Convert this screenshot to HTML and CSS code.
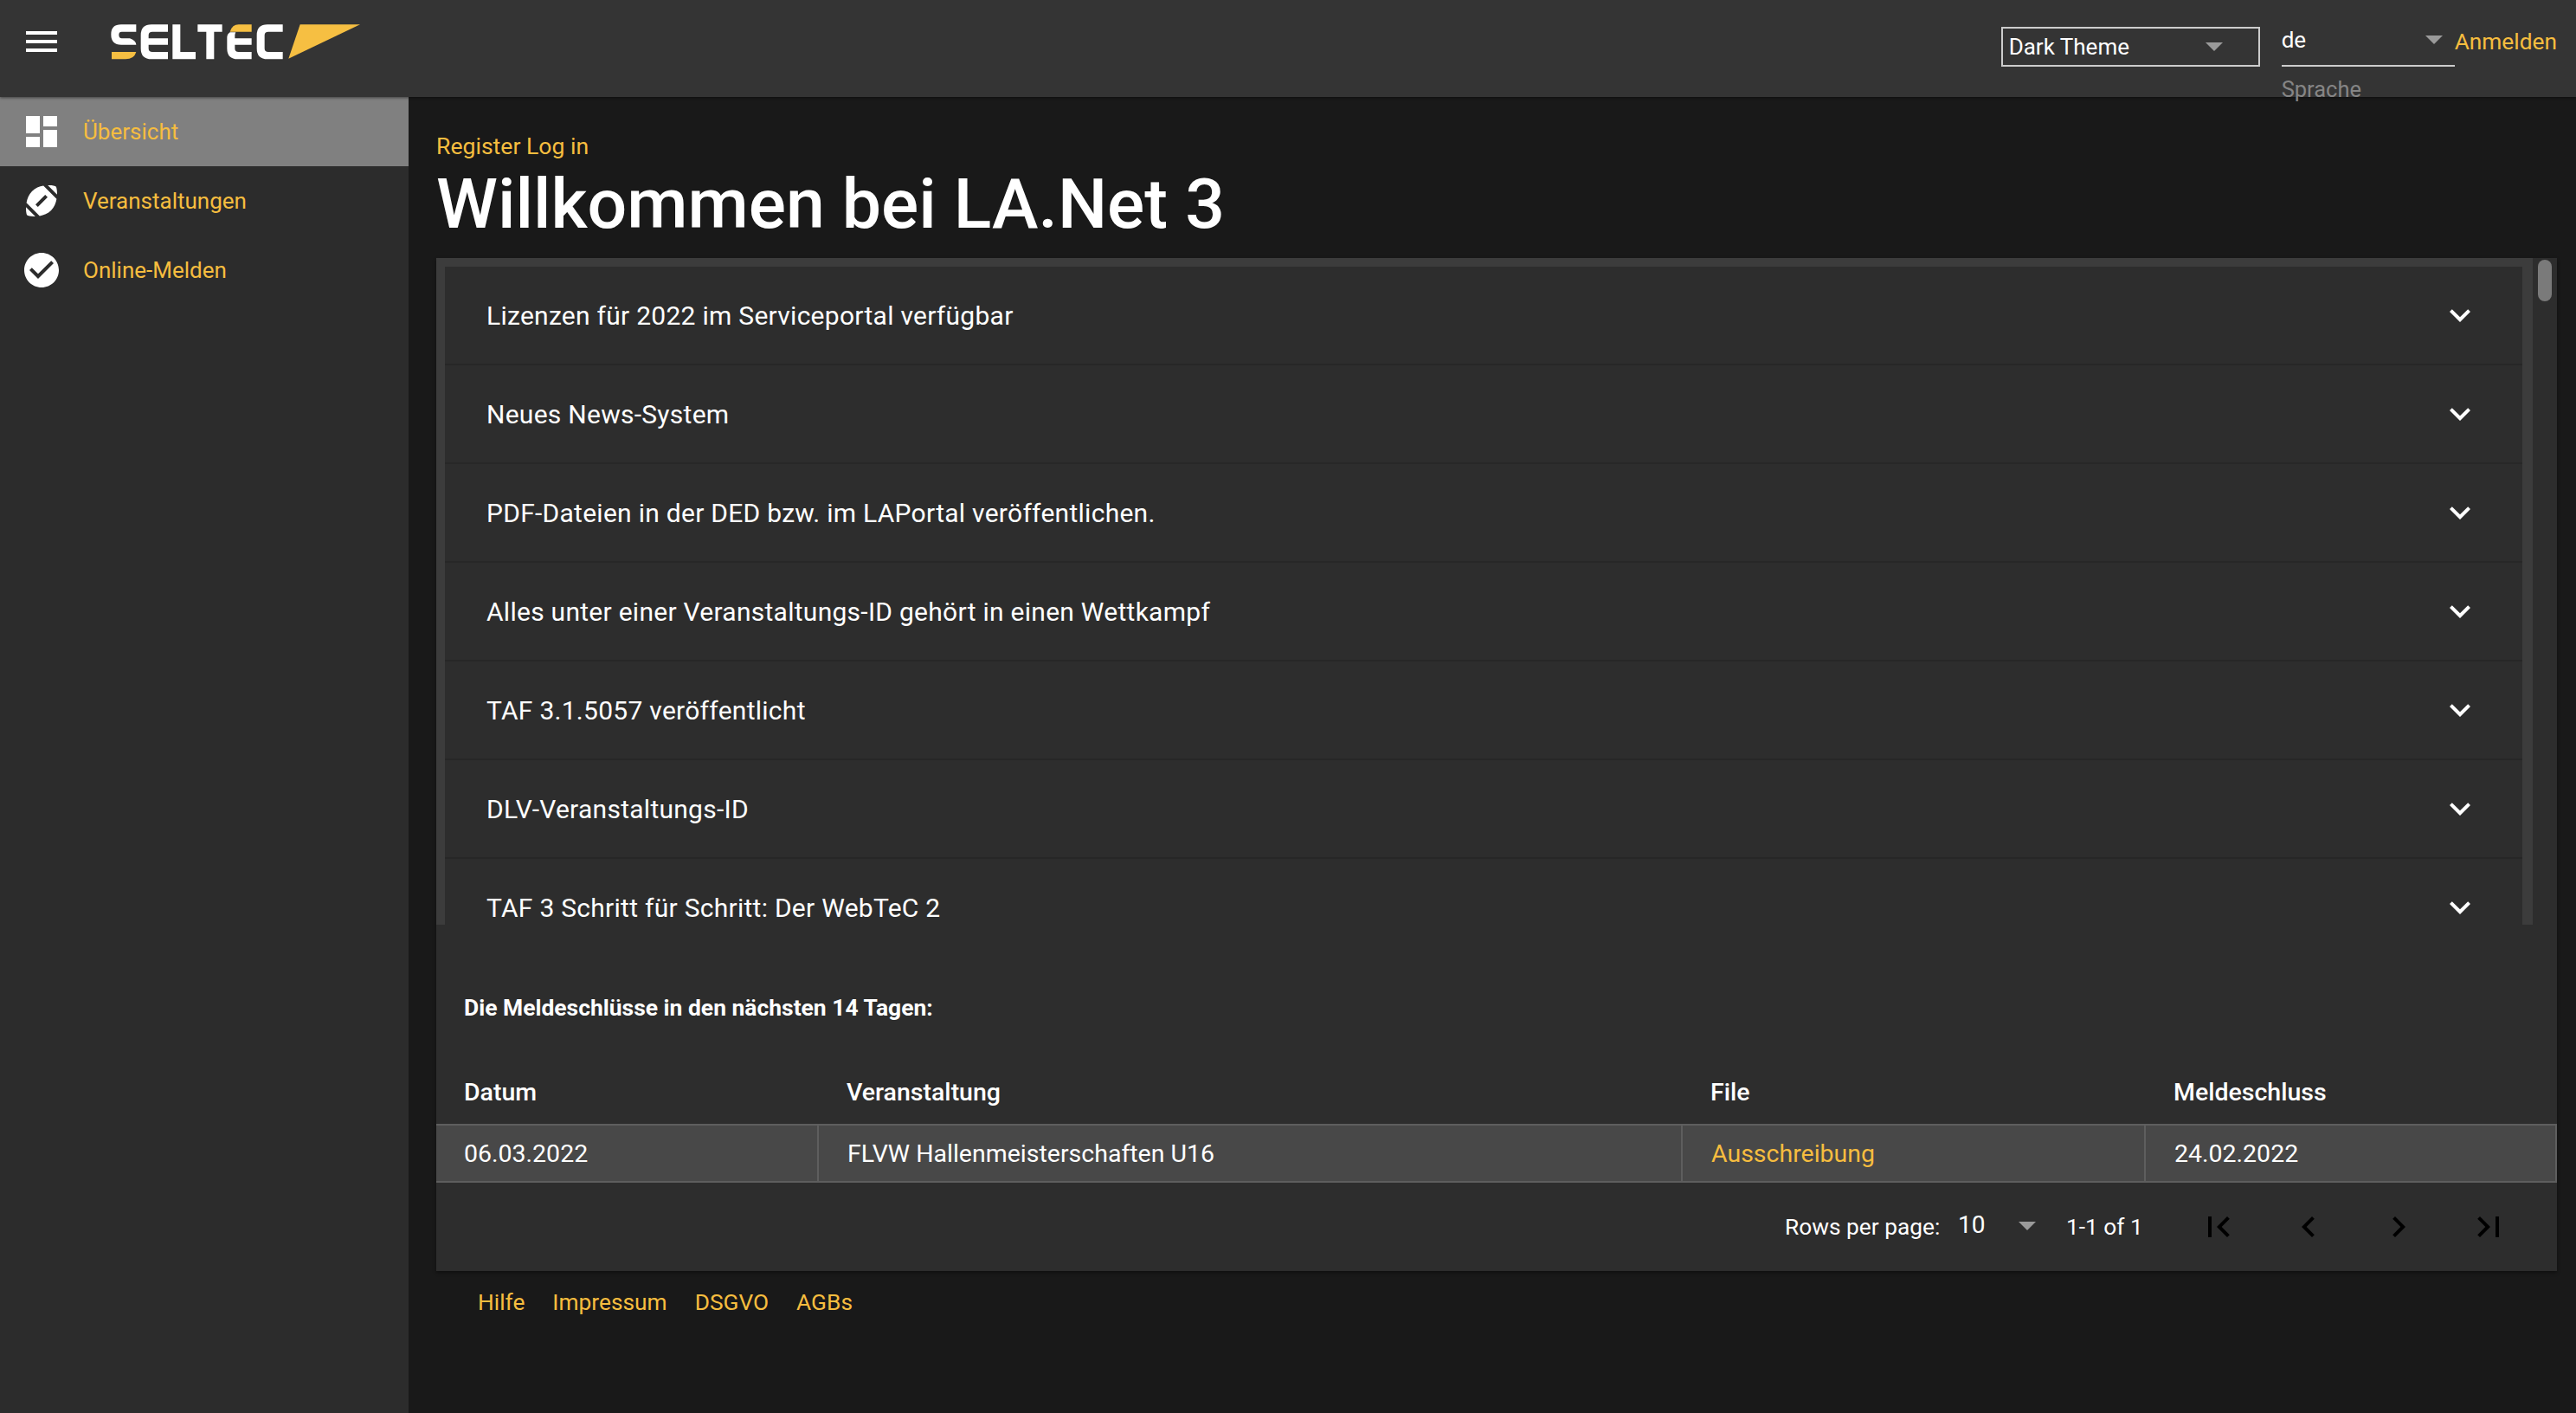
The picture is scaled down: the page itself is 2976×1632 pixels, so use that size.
FILE: index.html
```html
<!DOCTYPE html>
<html lang="de">
<head>
<meta charset="utf-8">
<title>LA.Net 3</title>
<link rel="stylesheet" href="styles.css">
</head>
<body>
<header class="topbar">
  <svg class="menu-icon" viewBox="0 0 24 24"><path d="M3 18h18v-2H3v2zm0-5h18v-2H3v2zm0-7v2h18V6H3z"/></svg>
  <svg class="logo" viewBox="0 0 1020 240" role="img" aria-label="SELTEC">
    <g class="logo-white">
      <path d="M172 55H120Q85 55 85 89Q85 125 120 125H172Q172 112 150 103H122Q112 103 112 90Q112 80 122 80H172Z"/>
      <path d="M282 55H225Q188 55 188 92V138Q188 175 225 175H282V150H228Q215 150 215 138V125H282V103H215V92Q215 80 228 80H282Z"/>
      <path d="M298 55H325V150H378V175H298Z"/>
      <path d="M385 55H470V80H442V175H415V80H385Z"/>
      <path d="M572 103H514V92Q514 88 517 82H497Q487 88 487 100V138Q487 175 524 175H572V150H527Q514 150 514 138V125H572Z"/>
      <path d="M680 55H627Q590 55 590 92V138Q590 175 627 175H680V150H630Q617 150 617 138V92Q617 80 630 80H680Z"/>
    </g>
    <g class="logo-yellow">
      <path d="M87 150H172Q165 175 135 175H87Z"/>
      <path d="M572 55H527Q505 55 497 80H572Z"/>
      <path d="M740 55H948L700 173Z"/>
    </g>
  </svg>
  <div class="theme-select">
    <span>Dark Theme</span>
    <i class="arrow"></i>
  </div>
  <div class="lang-select">
    <div class="lang-value"><span>de</span><i class="arrow"></i></div>
    <div class="lang-hint">Sprache</div>
  </div>
  <a class="login link">Anmelden</a>
</header>
<div class="shell">
  <nav class="sidebar">
    <a class="nav-item is-active">
      <svg class="nav-icon" viewBox="0 0 24 24"><path d="M3 13h8V3H3v10zm0 8h8v-6H3v6zm10 0h8V11h-8v10zm0-18v6h8V3h-8z"/></svg>
      <span>Übersicht</span>
    </a>
    <a class="nav-item">
      <svg class="nav-icon" viewBox="0 0 24 24"><path d="M3.02,15.62c-0.08,2.42,0.32,4.34,0.67,4.69s2.28,0.76,4.69,0.67L3.02,15.62z M13.08,3.28C10.75,3.7,8.29,4.62,6.46,6.46 s-2.76,4.29-3.18,6.62l7.63,7.63c2.34-0.41,4.79-1.34,6.62-3.18s2.76-4.29,3.18-6.62L13.08,3.28z M9.9,15.5l-1.4-1.4l5.6-5.6 l1.4,1.4L9.9,15.5z M20.98,8.38c0.08-2.42-0.32-4.34-0.67-4.69s-2.28-0.76-4.69-0.67L20.98,8.38z"/></svg>
      <span>Veranstaltungen</span>
    </a>
    <a class="nav-item">
      <svg class="nav-icon" viewBox="0 0 24 24"><path d="M12 2C6.48 2 2 6.48 2 12s4.48 10 10 10 10-4.48 10-10S17.52 2 12 2zm-2 15l-5-5 1.41-1.41L10 14.17l7.59-7.59L19 8l-9 9z"/></svg>
      <span>Online-Melden</span>
    </a>
  </nav>
  <main class="content">
    <div class="auth-links link">Register Log in</div>
    <h1 class="title">Willkommen bei LA.Net 3</h1>
    <section class="card">
      <div class="news">
        <div class="news-list">
          <div class="news-row"><span>Lizenzen für 2022 im Serviceportal verfügbar</span><svg class="chevron" viewBox="0 0 24 24"><path d="M7.41 8.59L12 13.17l4.59-4.58L18 10l-6 6-6-6z"/></svg></div>
          <div class="news-row"><span>Neues News-System</span><svg class="chevron" viewBox="0 0 24 24"><path d="M7.41 8.59L12 13.17l4.59-4.58L18 10l-6 6-6-6z"/></svg></div>
          <div class="news-row"><span>PDF-Dateien in der DED bzw. im LAPortal veröffentlichen.</span><svg class="chevron" viewBox="0 0 24 24"><path d="M7.41 8.59L12 13.17l4.59-4.58L18 10l-6 6-6-6z"/></svg></div>
          <div class="news-row"><span>Alles unter einer Veranstaltungs-ID gehört in einen Wettkampf</span><svg class="chevron" viewBox="0 0 24 24"><path d="M7.41 8.59L12 13.17l4.59-4.58L18 10l-6 6-6-6z"/></svg></div>
          <div class="news-row"><span>TAF 3.1.5057 veröffentlicht</span><svg class="chevron" viewBox="0 0 24 24"><path d="M7.41 8.59L12 13.17l4.59-4.58L18 10l-6 6-6-6z"/></svg></div>
          <div class="news-row"><span>DLV-Veranstaltungs-ID</span><svg class="chevron" viewBox="0 0 24 24"><path d="M7.41 8.59L12 13.17l4.59-4.58L18 10l-6 6-6-6z"/></svg></div>
          <div class="news-row"><span>TAF 3 Schritt für Schritt: Der WebTeC 2</span><svg class="chevron" viewBox="0 0 24 24"><path d="M7.41 8.59L12 13.17l4.59-4.58L18 10l-6 6-6-6z"/></svg></div>
        </div>
        <div class="track"><div class="thumb"></div></div>
      </div>
      <h2 class="deadline-title">Die Meldeschlüsse in den nächsten 14 Tagen:</h2>
      <div class="table">
        <div class="table-head">
          <div class="th">Datum</div>
          <div class="th">Veranstaltung</div>
          <div class="th">File</div>
          <div class="th">Meldeschluss</div>
        </div>
        <div class="table-row">
          <div class="td">06.03.2022</div>
          <div class="td">FLVW Hallenmeisterschaften U16</div>
          <div class="td link">Ausschreibung</div>
          <div class="td">24.02.2022</div>
        </div>
      </div>
      <div class="pager">
        <span class="pager-label">Rows per page:</span>
        <span class="pager-size">10</span>
        <i class="arrow pager-arrow"></i>
        <span class="pager-range">1-1 of 1</span>
        <div class="pager-buttons">
          <svg class="pager-icon" viewBox="0 0 24 24"><path d="M18.41 16.59L13.82 12l4.59-4.59L17 6l-6 6 6 6zM6 6h2v12H6z"/></svg>
          <svg class="pager-icon" viewBox="0 0 24 24"><path d="M15.41 7.41L14 6l-6 6 6 6 1.41-1.41L10.83 12z"/></svg>
          <svg class="pager-icon" viewBox="0 0 24 24"><path d="M10 6L8.59 7.41 13.17 12l-4.58 4.59L10 18l6-6z"/></svg>
          <svg class="pager-icon" viewBox="0 0 24 24"><path d="M5.59 7.41L10.18 12l-4.59 4.59L7 18l6-6-6-6zM16 6h2v12h-2z"/></svg>
        </div>
      </div>
    </section>
    <footer class="footer link">
      <a>Hilfe</a>
      <a>Impressum</a>
      <a>DSGVO</a>
      <a>AGBs</a>
    </footer>
  </main>
</div>
</body>
</html>
```
FILE: styles.css
```css
* { box-sizing: border-box; }
html, body { margin: 0; height: 100%; }
body {
  background: #191919;
  color: #fff;
  font-family: Roboto, "Liberation Sans", sans-serif;
  font-size: 26px;
  overflow: hidden;
}
.link { color: #f6bd3f; }

.topbar {
  position: relative;
  z-index: 2;
  display: flex;
  align-items: flex-start;
  height: 112px;
  background: #343434;
  box-shadow: 0 1px 3px rgba(0,0,0,.5);
}
.menu-icon { width: 48px; height: 48px; margin: 24px 0 0 24px; fill: #fff; flex: none; }
.logo { width: 340px; height: 80px; margin: 10px 0 0 28px; flex: none; }
.logo-white { fill: #fff; }
.logo-yellow { fill: #f6bf42; }
.arrow {
  display: block;
  width: 0; height: 0;
  border-left: 10px solid transparent;
  border-right: 10px solid transparent;
  border-top: 10px solid #9a9a9a;
}
.theme-select {
  display: flex;
  align-items: center;
  justify-content: space-between;
  width: 299px;
  height: 46px;
  margin: 31px 0 0 auto;
  padding: 0 41px 0 7px;
  border: 2px solid #ccc;
}
.lang-select { width: 200px; margin: 27px 0 0 25px; }
.lang-value {
  display: flex;
  align-items: center;
  justify-content: space-between;
  height: 50px;
  padding: 0 14px 10px 0;
  border-bottom: 2px solid #ccc;
}
.lang-hint { margin-top: 12px; font-size: 25.5px; line-height: 28px; color: #858585; }
.login { margin: 30px 22px 0 0; font-size: 26.3px; line-height: 36px; }

.shell { display: flex; height: 1520px; }
.sidebar { flex: none; width: 472px; background: #2c2c2c; }
.nav-item {
  display: flex;
  align-items: center;
  gap: 24px;
  height: 80px;
  padding-left: 24px;
  color: #f6bd3f;
}
.nav-item.is-active { background: #808080; }
.nav-icon { width: 48px; height: 48px; fill: #fff; flex: none; }

.content { flex: 1; min-width: 0; padding: 36px 22px 0 32px; }
.auth-links { font-size: 26.6px; line-height: 42px; }
.title { margin: 0 0 16px; font-size: 80.6px; font-weight: 500; line-height: 92px; }
.card { background: #2d2d2d; box-shadow: 0 2px 4px rgba(0,0,0,.4); height: 1170px; }

.news { display: flex; height: 770px; }
.news-list {
  flex: 1;
  min-width: 0;
  overflow: hidden;
  border-style: solid;
  border-color: #3c3c3c;
  border-width: 10px 12px 0 10px;
}
.news-row {
  display: flex;
  align-items: center;
  justify-content: space-between;
  height: 114px;
  padding: 0 48px;
  font-size: 30px;
  letter-spacing: .27px;
  border-bottom: 2px solid #272727;
}
.chevron { width: 48px; height: 48px; fill: #fff; flex: none; }
.track { flex: none; width: 28px; padding: 2px 6px 0; }
.thumb { height: 48px; border-radius: 8px; background: #7a7a7a; }

.deadline-title { margin: 0; padding: 80px 32px 0; font-size: 26.45px; font-weight: 700; line-height: 32px; }
.table { margin-top: 64px; font-size: 28.5px; }
.table-head, .table-row { display: grid; grid-template-columns: 442px 998px 535px 1fr; }
.th { padding: 0 32px; font-weight: 500; line-height: 36px; height: 54px; }
.table-row {
  height: 68px;
  background: #484848;
  border-top: 2px solid #5e5e5e;
  border-bottom: 2px solid #5e5e5e;
}
.td { display: flex; align-items: center; padding: 0 32px; border-right: 2px solid #5e5e5e; }
.td + .td { padding-left: 33px; }

.pager { display: flex; align-items: center; height: 102px; padding-left: 1558px; font-size: 26.3px; }
.pager-label { width: 200px; }
.pager-size { width: 70px; font-size: 28px; margin-top: -6px; }
.pager-arrow { margin-top: -2px; }
.pager-range { margin-left: 35px; width: 152px; }
.pager-buttons { display: flex; gap: 56px; }
.pager-icon { width: 48px; height: 48px; fill: #000; flex: none; }

.footer { display: flex; gap: 32px; padding: 16px 0 0 48px; font-size: 26.3px; line-height: 40px; }
```
